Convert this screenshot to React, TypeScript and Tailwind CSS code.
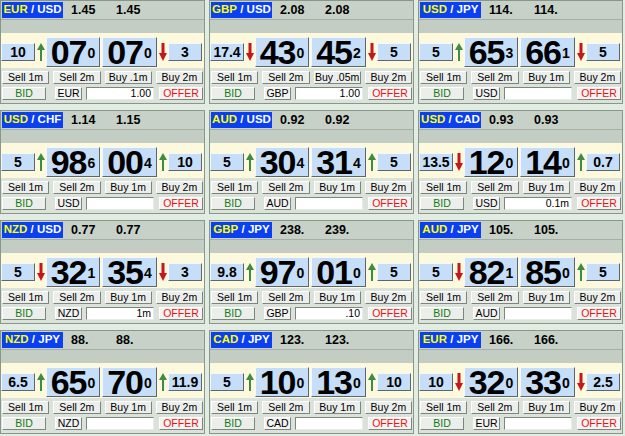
import React from "react";

type Dir = "up" | "down";

type Quote = {
  base: string;
  quote: string;
  bid: string;
  ask: string;
  left: string;
  leftDir: Dir;
  big1: [string, string];
  big2: [string, string];
  rightDir: Dir;
  right: string;
  buy1: string;
  ccy: string;
  amount: string;
};

const quotes: Quote[] = [
  { base: "EUR", quote: "USD", bid: "1.45", ask: "1.45", left: "10", leftDir: "up", big1: ["07", "0"], big2: ["07", "0"], rightDir: "down", right: "3", buy1: "Buy .1m", ccy: "EUR", amount: "1.00" },
  { base: "GBP", quote: "USD", bid: "2.08", ask: "2.08", left: "17.4", leftDir: "down", big1: ["43", "0"], big2: ["45", "2"], rightDir: "down", right: "5", buy1: "Buy .05m", ccy: "GBP", amount: "1.00" },
  { base: "USD", quote: "JPY", bid: "114.", ask: "114.", left: "5", leftDir: "up", big1: ["65", "3"], big2: ["66", "1"], rightDir: "down", right: "5", buy1: "Buy 1m", ccy: "USD", amount: "" },
  { base: "USD", quote: "CHF", bid: "1.14", ask: "1.15", left: "5", leftDir: "up", big1: ["98", "6"], big2: ["00", "4"], rightDir: "up", right: "10", buy1: "Buy 1m", ccy: "USD", amount: "" },
  { base: "AUD", quote: "USD", bid: "0.92", ask: "0.92", left: "5", leftDir: "up", big1: ["30", "4"], big2: ["31", "4"], rightDir: "up", right: "5", buy1: "Buy 1m", ccy: "AUD", amount: "" },
  { base: "USD", quote: "CAD", bid: "0.93", ask: "0.93", left: "13.5", leftDir: "down", big1: ["12", "0"], big2: ["14", "0"], rightDir: "up", right: "0.7", buy1: "Buy 1m", ccy: "USD", amount: "0.1m" },
  { base: "NZD", quote: "USD", bid: "0.77", ask: "0.77", left: "5", leftDir: "down", big1: ["32", "1"], big2: ["35", "4"], rightDir: "down", right: "3", buy1: "Buy 1m", ccy: "NZD", amount: "1m" },
  { base: "GBP", quote: "JPY", bid: "238.", ask: "239.", left: "9.8", leftDir: "up", big1: ["97", "0"], big2: ["01", "0"], rightDir: "up", right: "5", buy1: "Buy 1m", ccy: "GBP", amount: ".10" },
  { base: "AUD", quote: "JPY", bid: "105.", ask: "105.", left: "5", leftDir: "down", big1: ["82", "1"], big2: ["85", "0"], rightDir: "up", right: "5", buy1: "Buy 1m", ccy: "AUD", amount: "" },
  { base: "NZD", quote: "JPY", bid: "88.", ask: "88.", left: "6.5", leftDir: "up", big1: ["65", "0"], big2: ["70", "0"], rightDir: "up", right: "11.9", buy1: "Buy 1m", ccy: "NZD", amount: "" },
  { base: "CAD", quote: "JPY", bid: "123.", ask: "123.", left: "5", leftDir: "up", big1: ["10", "0"], big2: ["13", "0"], rightDir: "up", right: "10", buy1: "Buy 1m", ccy: "CAD", amount: "" },
  { base: "EUR", quote: "JPY", bid: "166.", ask: "166.", left: "10", leftDir: "down", big1: ["32", "0"], big2: ["33", "0"], rightDir: "down", right: "2.5", buy1: "Buy 1m", ccy: "EUR", amount: "" },
];

const Arrow = ({ dir }: { dir: Dir }) =>
  dir === "up" ? (
    <svg width="8" height="18" viewBox="0 0 8 18">
      <polygon points="4,0 8,7 0,7" fill="#3f8a44" />
      <rect x="3" y="6" width="2" height="12" fill="#3f8a44" />
    </svg>
  ) : (
    <svg width="8" height="18" viewBox="0 0 8 18">
      <rect x="2.5" y="0" width="3" height="11" fill="#c4161c" />
      <polygon points="0,10 8,10 4,18" fill="#c4161c" />
    </svg>
  );

const raised = "border border-t-[#f4f8fc] border-l-[#f4f8fc] border-r-[#5c6670] border-b-[#5c6670]";
const btn = "border border-t-white border-l-white border-r-[#7c867c] border-b-[#7c867c] bg-[#eceeec]";

const BigPrice = ({ v, w }: { v: [string, string]; w: string }) => (
  <div className={`${w} h-[30px] bg-[#c6def7] ${raised} flex items-center justify-center font-bold`}>
    <span className="text-[34px] leading-none tracking-[-1px]">
      {v[0]}
      <span className="text-[14px] align-[6px] tracking-normal ml-[1px]">{v[1]}</span>
    </span>
  </div>
);

const Tile = ({ q }: { q: Quote }) => (
  <div className="flex flex-col border border-[#889888] bg-[#dae2da] overflow-hidden">
    <div className="flex items-center h-[19px] bg-[#c7d1c7] border-b border-[#a3b0a3] shrink-0">
      <div className="ml-[1px] w-[61px] h-[16px] bg-[#0a3ff2] flex items-center justify-center text-[11.5px] font-bold leading-none">
        <span className="text-[#ffff00]">{q.base}</span>
        <span className="text-white">&nbsp;/ {q.quote}</span>
      </div>
      <span className="ml-[8px] w-[45px] text-[12.5px] font-bold text-black leading-none">{q.bid}</span>
      <span className="text-[12.5px] font-bold text-black leading-none">{q.ask}</span>
    </div>
    <div className="h-[13px] bg-[#c3cdc3] shrink-0" />
    <div className="h-[35px] bg-[#fdf9dc] shrink-0 flex items-center pt-[4px] pb-[1px]">
      <div className={`w-[34px] h-[18px] bg-[#c6def7] ${raised} flex items-center justify-center text-[14px] font-bold leading-none`}>
        {q.left}
      </div>
      <div className="w-[11px] flex justify-center">
        <Arrow dir={q.leftDir} />
      </div>
      <BigPrice v={q.big1} w="w-[54px]" />
      <div className="w-[2px]" />
      <BigPrice v={q.big2} w="w-[55px]" />
      <div className="w-[11px] flex justify-center">
        <Arrow dir={q.rightDir} />
      </div>
      <div className={`w-[34px] h-[18px] bg-[#c6def7] ${raised} flex items-center justify-center text-[14px] font-bold leading-none`}>
        {q.right}
      </div>
    </div>
    <div className="grid grid-cols-4 gap-x-[4px] px-[1px] pt-[3px]">
      {["Sell 1m", "Sell 2m", q.buy1, "Buy 2m"].map((t, i) => (
        <div key={i} className={`h-[13px] ${btn} flex items-center justify-center text-[10.5px] leading-none text-black`}>
          {t}
        </div>
      ))}
    </div>
    <div className="flex items-center px-[1px] pt-[3px]">
      <div className={`w-[44px] h-[13px] ${btn} bg-[#e3ede3] flex items-center justify-center text-[10.5px] leading-none text-[#137a13]`}>
        BID
      </div>
      <div className={`ml-[9px] w-[27px] h-[13px] ${btn} bg-[#f1f2f1] flex items-center justify-center text-[10.5px] leading-none text-black`}>
        {q.ccy}
      </div>
      <div className="ml-[4px] w-[68px] h-[13px] bg-white border border-t-[#7c867c] border-l-[#7c867c] border-r-[#e8ece8] border-b-[#e8ece8] flex items-center justify-end pr-[2px] text-[10.5px] leading-none text-black">
        {q.amount}
      </div>
      <div className={`ml-[5px] w-[44px] h-[13px] ${btn} bg-[#f3f3f3] flex items-center justify-center text-[10.5px] leading-none text-[#ee1111]`}>
        OFFER
      </div>
    </div>
  </div>
);

export default function App() {
  return (
    <div
      className="w-[625px] h-[436px] bg-[#e3ece3] grid grid-cols-[205px_205px_205px] grid-rows-[104px_104px_104px_104px] gap-x-[4px] gap-y-[6px]"
      style={{ fontFamily: '"Liberation Sans", Arial, sans-serif' }}
    >
      {quotes.map((q, i) => (
        <Tile key={i} q={q} />
      ))}
    </div>
  );
}
